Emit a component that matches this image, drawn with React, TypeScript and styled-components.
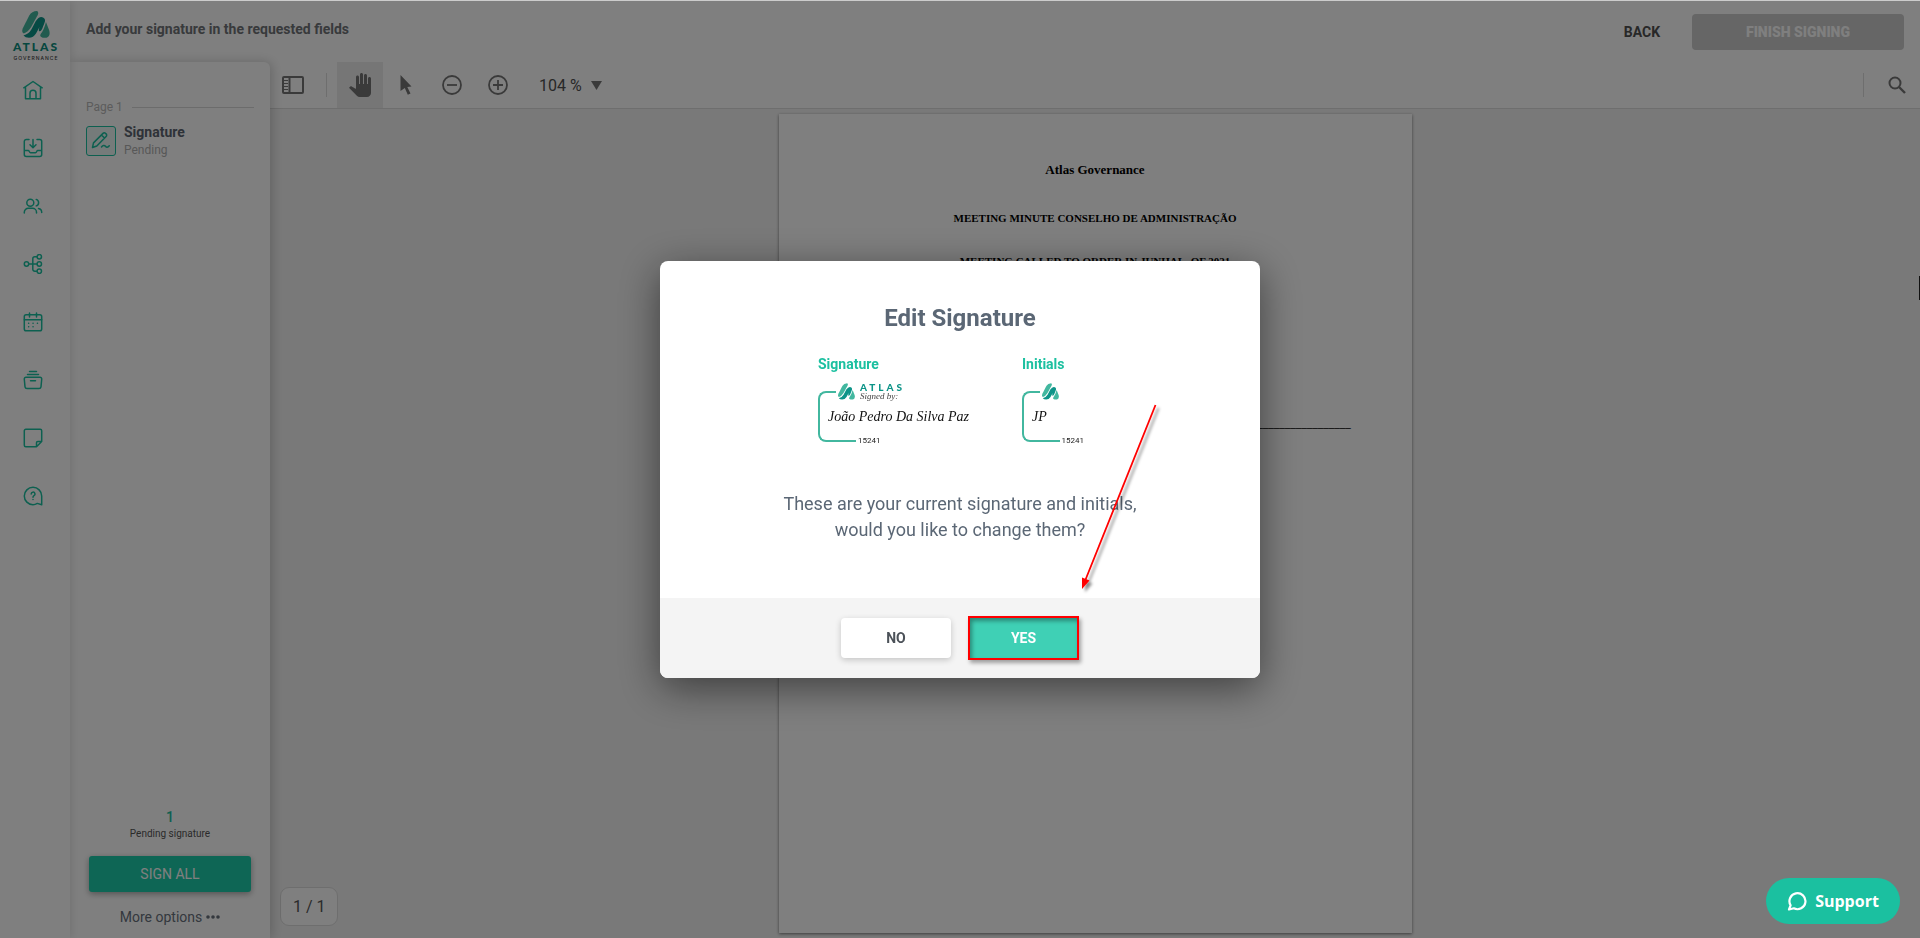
import React from "react";
import styled, { createGlobalStyle } from "styled-components";

const teal = "#1bc0a0";

const GlobalStyle = createGlobalStyle`
  *, *::before, *::after { box-sizing: border-box; }
  body { margin: 0; font-family: Roboto, "Liberation Sans", sans-serif; font-size: 14px; color: #666; background: #fff; }
  button { font: inherit; border: 0; padding: 0; background: none; cursor: pointer; }
  h1, h2, h3, p, ul, dl, dd { margin: 0; padding: 0; }
  svg { display: block; }
`;

const Shell = styled.div`
  display: flex;
  height: 100vh;
  min-height: 640px;
  border-top: 1px solid #ccc;
  overflow: hidden;
`;

const Sidebar = styled.nav`
  flex: 0 0 70px;
  padding: 10px 4px 0 0;
  display: flex;
  flex-direction: column;
  align-items: center;
  background: #fff;
  box-shadow: 2px 0 8px rgba(0, 0, 0, 0.1);
  z-index: 2;
`;

const Brand = styled.a`
  display: flex;
  flex-direction: column;
  align-items: center;
  gap: 3px;
  width: 54px;
  height: 50px;
  margin-left: 6px;
  text-decoration: none;
`;

const BrandName = styled.span`
  font: 900 12px/12px Lato, sans-serif;
  letter-spacing: 2px;
  color: #0d8f80;
`;

const BrandSub = styled.span`
  font: 500 5px/5px Inter, sans-serif;
  letter-spacing: 1px;
  color: #444;
`;

const NavList = styled.ul`
  list-style: none;
`;

const NavLink = styled.a`
  display: flex;
  align-items: center;
  justify-content: center;
  width: 40px;
  height: 58px;
  color: ${teal};
`;

const Main = styled.div`
  flex: 1;
  min-width: 0;
  display: flex;
  flex-direction: column;
`;

const Header = styled.header`
  flex: 0 0 61px;
  display: flex;
  align-items: flex-start;
  padding: 13px 16px 0;
`;

const Title = styled.h1`
  flex: 1;
  font-size: 14px;
  line-height: 30px;
  font-weight: 700;
  color: #707478;
`;

const HeaderButton = styled.button<{ $filled?: boolean }>`
  height: 36px;
  width: ${(p) => (p.$filled ? "212px" : "100px")};
  border-radius: 4px;
  font-weight: ${(p) => (p.$filled ? 900 : 700)};
  color: ${(p) => (p.$filled ? "#fff" : "#505050")};
  background: ${(p) => (p.$filled ? "#ccc" : "transparent")};
`;

const Body = styled.div`
  flex: 1;
  display: flex;
  min-height: 0;
`;

const Panel = styled.aside`
  flex: 0 0 200px;
  display: flex;
  flex-direction: column;
  padding: 35px 16px 10px;
  background: #fff;
  border-radius: 0 6px 0 0;
  box-shadow: 2px 0 12px rgba(0, 0, 0, 0.2);
  z-index: 1;
`;

const PageLabel = styled.h2`
  display: flex;
  align-items: center;
  gap: 9px;
  font-size: 12px;
  line-height: 20px;
  font-weight: 400;
  color: #b8b8b8;
  &::after { content: ""; flex: 1; height: 1px; background: #d8d8d8; }
`;

const FieldRow = styled.button`
  display: flex;
  align-items: center;
  gap: 8px;
  margin-top: 6px;
  text-align: left;
`;

const FieldIcon = styled.span`
  display: flex;
  align-items: center;
  justify-content: center;
  width: 30px;
  height: 30px;
  border: 1px solid ${teal};
  border-radius: 3px;
  background: #eaf6f4;
  color: ${teal};
`;

const FieldName = styled.span`
  display: block;
  font-size: 14px;
  line-height: 18px;
  font-weight: 700;
  color: #5c6570;
`;

const FieldState = styled.span`
  display: block;
  font-size: 12px;
  line-height: 18px;
  color: #b0b0b0;
`;

const PanelFooter = styled.div`
  display: flex;
  flex-direction: column;
  align-items: center;
  margin-top: auto;
`;

const Count = styled.strong`
  font-size: 14px;
  line-height: 18px;
  font-weight: 500;
  color: ${teal};
`;

const CountLabel = styled.span`
  font-size: 10px;
  line-height: 16px;
  color: #555;
`;

const SignAll = styled.button`
  width: 162px;
  height: 36px;
  margin: 14px 0;
  border-radius: 3px;
  background: #1dccaa;
  color: #fff;
  box-shadow: 0 2px 6px rgba(0, 0, 0, 0.35);
`;

const MoreOptions = styled.button`
  display: flex;
  align-items: center;
  gap: 4px;
  line-height: 22px;
  color: #68717c;
`;

const Viewer = styled.main`
  flex: 1;
  min-width: 0;
  display: flex;
  flex-direction: column;
  position: relative;
`;

const Toolbar = styled.div`
  flex: 0 0 47px;
  display: flex;
  align-items: center;
  border-bottom: 1px solid #dcdcdc;
  color: #757575;
`;

const Tool = styled.button<{ $active?: boolean }>`
  display: flex;
  align-items: center;
  justify-content: center;
  width: 46px;
  height: 46px;
  color: inherit;
  background: ${(p) => (p.$active ? "#ececec" : "transparent")};
`;

const Divider = styled.span<{ $push?: boolean }>`
  width: 1px;
  height: 24px;
  margin: 0 10px;
  ${(p) => p.$push && "margin-left: auto;"}
  background: #dcdcdc;
`;

const Zoom = styled.button`
  display: flex;
  align-items: center;
  gap: 9px;
  margin-left: 18px;
  font-size: 16px;
  color: #505050;
`;

const Canvas = styled.div`
  flex: 1;
  min-height: 0;
  display: flex;
  justify-content: center;
  align-items: flex-start;
  padding-top: 5px;
  background: #f3f3f3;
  overflow: hidden;
`;

const Sheet = styled.article`
  width: 633px;
  height: 819px;
  padding: 48px 58px;
  background: #fff;
  box-shadow: 0 1px 3px rgba(0, 0, 0, 0.5);
  font: 700 11px/16px "Liberation Serif", serif;
  text-align: center;
  color: #000;
`;

const SheetTitle = styled.h2`
  margin-bottom: 32px;
  font-size: 13px;
  line-height: 16px;
`;

const SheetLine = styled.p`
  margin-bottom: 27px;
`;

const SignLine = styled.p`
  margin-top: 146px;
  white-space: nowrap;
  overflow: hidden;
  direction: rtl;
`;

const PageBadge = styled.output`
  position: absolute;
  left: 10px;
  bottom: 12px;
  padding: 0 11px 0 12px;
  border: 1px solid #dcdcdc;
  border-radius: 9px;
  background: #fff;
  font-size: 16px;
  line-height: 37px;
  color: #555;
`;

const Overlay = styled.div`
  position: fixed;
  inset: 1px 0 0;
  z-index: 10;
  display: flex;
  align-items: center;
  justify-content: center;
  background: rgba(0, 0, 0, 0.5);
`;

const Dialog = styled.section`
  position: relative;
  width: min(600px, 94%);
  border-radius: 8px;
  background: #fff;
  box-shadow: 0 10px 40px rgba(0, 0, 0, 0.5);
`;

const DialogBody = styled.div`
  padding: 41px 40px 55px;
  color: #5b6775;
`;

const DialogTitle = styled.h2`
  font-size: 24px;
  line-height: 32px;
  font-weight: 700;
  text-align: center;
`;

const Samples = styled.div`
  display: grid;
  grid-template-columns: 204px 62px;
  justify-content: center;
  margin: 20px 0 44px;
  padding-right: 18px;
`;

const SampleName = styled.h3`
  font-size: 14px;
  line-height: 20px;
  color: ${teal};
`;

const Stamp = styled.div`
  margin-top: 9px;
`;

const StampTop = styled.div`
  display: flex;
  height: 17px;
  &::before {
    content: "";
    width: 18px;
    margin: 8px 2px 0 0;
    border: solid #42b79f;
    border-width: 2px 0 0 2px;
    border-radius: 8px 0 0 0;
  }
`;

const StampBrand = styled.span`
  display: flex;
  flex-direction: column;
  margin-left: 5px;
`;

const StampName = styled.span`
  font: 900 10px/9px Lato, sans-serif;
  letter-spacing: 3px;
  color: #0d9488;
`;

const StampBy = styled.span`
  font: italic 400 9px/8px "Liberation Serif", serif;
  color: #444;
`;

const StampText = styled.div`
  padding-left: 8px;
  border-left: 2px solid #42b79f;
  font: italic 400 14px/33px "Liberation Serif", serif;
  white-space: nowrap;
  color: #111;
`;

const StampBottom = styled.div`
  display: flex;
  height: 14px;
  font-size: 8px;
  line-height: 16px;
  color: #222;
  &::before {
    content: "";
    width: 38px;
    height: 9px;
    margin-right: 2px;
    border: solid #42b79f;
    border-width: 0 0 2px 2px;
    border-radius: 0 0 0 8px;
  }
`;

const Question = styled.p`
  font-size: 18px;
  line-height: 26px;
  text-align: center;
`;

const DialogFooter = styled.footer`
  display: flex;
  align-items: center;
  justify-content: center;
  gap: 17px;
  height: 80px;
  border-radius: 0 0 8px 8px;
  background: #f4f4f4;
`;

const NoButton = styled.button`
  width: 110px;
  height: 40px;
  border-radius: 4px;
  background: #fff;
  font-weight: 700;
  color: #4c5259;
  box-shadow: 0 2px 6px rgba(0, 0, 0, 0.2);
`;

const YesButton = styled.button`
  width: 111px;
  height: 44px;
  border: 2px solid #f00;
  background: #3fd0b5;
  font-weight: 700;
  color: #fff;
  box-shadow: 2px 3px 4px rgba(0, 0, 0, 0.35), inset 2px 3px 4px rgba(0, 0, 0, 0.35);
`;

const Pointer = styled.svg`
  position: absolute;
  right: 98px;
  top: 142px;
  pointer-events: none;
`;

const Support = styled.button`
  position: fixed;
  right: 20px;
  bottom: 14px;
  z-index: 20;
  display: flex;
  align-items: center;
  justify-content: center;
  gap: 8px;
  width: 134px;
  height: 46px;
  border-radius: 23px;
  background: ${teal};
  color: #fff;
  font: 700 16px/24px "Open Sans", "Noto Sans", sans-serif;
`;

const EdgeHandle = styled.span`
  position: fixed;
  right: 0;
  top: 276px;
  z-index: 11;
  width: 1px;
  height: 24px;
  background: #111;
`;

const Mark = ({ size }: { size: number }) => (
  <svg width={size} height={size} viewBox="0 0 86 84" aria-hidden="true">
    <path fill="#42b79f" d="M2 54 L22 14 Q30 0 46 0 Q53 3 48 13 L28 50 Q18 66 5 70 Q-3 67 2 54Z" />
    <path fill="#42b79f" d="M74 34 L84 60 Q89 78 76 83 L64 83 Q52 80 58 71 Q68 58 74 34Z" />
    <path fill="#0d9488" d="M4 76 Q20 73 29 57 L42 32 Q53 15 65 20 Q75 25 69 38 L62 56 Q57 66 52 62 Q51 58 54 50 L43 70 Q35 83 21 83 Q10 83 4 76Z" />
  </svg>
);

const Line = ({ children, size = 20 }: { children: React.ReactNode; size?: number }) => (
  <svg width={size} height={size} viewBox="0 0 20 20" fill="none" stroke="currentColor" strokeWidth="1.5" strokeLinecap="round" strokeLinejoin="round" aria-hidden="true">
    {children}
  </svg>
);

const navItems: { label: string; icon: React.ReactNode }[] = [
  { label: "Home", icon: <path d="M.8 7.8 10 1.5l9.2 6.3M2.5 7v11.7h15V7M7 18.700v-5.400a3 3 0 0 1 6 0v5.400" /> },
  { label: "Inbox", icon: <path d="M6 1.500H3.300a2 2 0 0 0-2 2v13a2 2 0 0 0 2 2h13.400a2 2 0 0 0 2-2v-13a2 2 0 0 0-2-2H14M10 1.500v8M7 6.800l3 3 3-3M1.300 12.500h4c1 0 1 2.200 2.200 2.200h5c1.200 0 1.200-2.200 2.200-2.200h4" /> },
  { label: "People", icon: <><circle cx="7.300" cy="6.700" r="3.500" /><path d="M1.300 17v-.7a4 4 0 0 1 4-4h4.200a4 4 0 0 1 4 4v.7M13.200 3.400a3.400 3.400 0 0 1 0 6.500M15.500 12.600a4 4 0 0 1 3.200 4" /></> },
  { label: "Structure", icon: <><circle cx="3.500" cy="10" r="2.200" /><circle cx="16.300" cy="2.800" r="2.200" /><circle cx="16.300" cy="10" r="2.200" /><circle cx="16.300" cy="17.200" r="2.200" /><path d="M5.700 10h8.400M14 2.800h-2.200a2 2 0 0 0-2 2v10.400a2 2 0 0 0 2 2H14" /></> },
  { label: "Calendar", icon: <><rect x="1.300" y="2.800" width="17.400" height="16" rx="1.800" /><path d="M1.300 7.700h17.400M6.500 1v4M13.500 1v4M5.600 11.200h.1M10 11.200h.1M14.400 11.200h.1M5.600 14.800h.1M10 14.800h.1" /></> },
  { label: "Archive", icon: <path d="M3 7.300h14a1.700 1.700 0 0 1 1.700 1.900l-.7 7.600a2 2 0 0 1-2 1.700H4a2 2 0 0 1-2-1.700l-.7-7.600A1.700 1.700 0 0 1 3 7.300M4.500 4.400h11M6.500 1.500h7M7.500 10.700h5" /> },
  { label: "Notes", icon: <path d="M2.800 1.300h14.400a1.500 1.500 0 0 1 1.500 1.500v10.700l-5.200 5.200H2.800a1.500 1.500 0 0 1-1.500-1.500V2.800a1.500 1.500 0 0 1 1.500-1.500M13.500 18.700v-3.900a1.300 1.300 0 0 1 1.300-1.300h3.900" /> },
  { label: "Help", icon: <path d="M18.700 18.700v-8.700a8.700 8.700 0 1 0-8.700 8.700c1.700 0 3-.5 4.300-1.300zM8.200 8a1.900 1.900 0 1 1 2.800 1.700c-.7.4-1 .8-1 1.600M10 13.500v.1" /> },
];

const StampCard = ({ text, brand }: { text: string; brand?: boolean }) => (
  <Stamp>
    <StampTop>
      <Mark size={17} />
      {brand && (
        <StampBrand>
          <StampName>ATLAS</StampName>
          <StampBy>Signed by:</StampBy>
        </StampBrand>
      )}
    </StampTop>
    <StampText>{text}</StampText>
    <StampBottom>15241</StampBottom>
  </Stamp>
);

export default function App() {
  return (
    <>
      <GlobalStyle />
      <Shell>
        <Sidebar aria-label="Main">
          <Brand href="#" aria-label="Atlas Governance">
            <Mark size={28} />
            <BrandName>ATLAS</BrandName>
            <BrandSub>GOVERNANCE</BrandSub>
          </Brand>
          <NavList>
            {navItems.map((item) => (
              <li key={item.label}>
                <NavLink href="#" aria-label={item.label}>
                  <Line>{item.icon}</Line>
                </NavLink>
              </li>
            ))}
          </NavList>
        </Sidebar>
        <Main>
          <Header>
            <Title>Add your signature in the requested fields</Title>
            <HeaderButton>BACK</HeaderButton>
            <HeaderButton $filled>FINISH SIGNING</HeaderButton>
          </Header>
          <Body>
            <Panel>
              <PageLabel>Page 1</PageLabel>
              <FieldRow>
                <FieldIcon>
                  <Line>
                    <path d="M1.500 16.500l1-4.600L12 2.400a1.800 1.800 0 0 1 2.600 0l.5.500a1.800 1.800 0 0 1 0 2.600L5.800 15zM10.500 4l3 3M10.500 16c1.500-2 3-2 4-.7s2.300 1.200 3.800-.5" />
                  </Line>
                </FieldIcon>
                <span>
                  <FieldName>Signature</FieldName>
                  <FieldState>Pending</FieldState>
                </span>
              </FieldRow>
              <PanelFooter>
                <Count>1</Count>
                <CountLabel>Pending signature</CountLabel>
                <SignAll>SIGN ALL</SignAll>
                <MoreOptions>
                  More options
                  <svg width="14" height="4" viewBox="0 0 14 4" fill="currentColor" aria-hidden="true">
                    <circle cx="2" cy="2" r="1.800" /><circle cx="7" cy="2" r="1.800" /><circle cx="12" cy="2" r="1.800" />
                  </svg>
                </MoreOptions>
              </PanelFooter>
            </Panel>
            <Viewer>
              <Toolbar role="toolbar">
                <Tool aria-label="Toggle sidebar">
                  <svg width="22" height="18" viewBox="0 0 22 18" fill="none" stroke="currentColor">
                    <rect x="1" y="1" width="20" height="16" rx="1" strokeWidth="2" />
                    <path d="M7.500 1v16" strokeWidth="2" /><path d="M2 4.500h4M2 7.500h4M2 10.500h4M2 13.500h4" />
                  </svg>
                </Tool>
                <Divider />
                <Tool $active aria-label="Pan">
                  <svg width="24" height="24" viewBox="0 0 24 24" fill="currentColor">
                    <path d="M23 5.500V20c0 2.200-1.800 4-4 4h-7.300c-1.080 0-2.100-.43-2.850-1.190L1 14.830s1.260-1.230 1.300-1.250c.22-.19.490-.29.790-.29.220 0 .420.060.600.160.040.010 4.310 2.460 4.310 2.460V4c0-.83.670-1.500 1.500-1.500S11 3.170 11 4v7h1V1.500c0-.83.670-1.500 1.500-1.500S15 .670 15 1.500V11h1V2.500c0-.83.670-1.500 1.500-1.500s1.500.670 1.500 1.500V11h1V5.500c0-.83.670-1.500 1.500-1.500s1.500.670 1.500 1.500z" />
                  </svg>
                </Tool>
                <Tool aria-label="Select">
                  <svg width="12" height="20" viewBox="0 0 12 20" fill="currentColor">
                    <path d="M.5 0 11.500 11.500 7.300 12 10.500 18.500 7.800 19.800 4.800 13 .5 16z" />
                  </svg>
                </Tool>
                <Tool aria-label="Zoom out">
                  <svg width="20" height="20" viewBox="0 0 20 20" fill="none" stroke="currentColor" strokeWidth="1.800"><circle cx="10" cy="10" r="9" /><path d="M5 10h10" /></svg>
                </Tool>
                <Tool aria-label="Zoom in">
                  <svg width="20" height="20" viewBox="0 0 20 20" fill="none" stroke="currentColor" strokeWidth="1.800"><circle cx="10" cy="10" r="9" /><path d="M5 10h10M10 5v10" /></svg>
                </Tool>
                <Zoom>
                  104 %
                  <svg width="11" height="9" viewBox="0 0 11 9" fill="#757575" aria-hidden="true"><path d="M0 0h11L5.500 9z" /></svg>
                </Zoom>
                <Divider $push />
                <Tool aria-label="Search">
                  <svg width="18" height="18" viewBox="0 0 18 18" fill="none" stroke="currentColor" strokeWidth="2"><circle cx="7" cy="7" r="5.500" /><path d="m11 11 6 6" strokeWidth="2.400" /></svg>
                </Tool>
              </Toolbar>
              <Canvas>
                <Sheet>
                  <SheetTitle>Atlas Governance</SheetTitle>
                  <SheetLine>MEETING MINUTE CONSELHO DE ADMINISTRAÇÃO</SheetLine>
                  <SheetLine>MEETING CALLED TO ORDER IN JUNHAL, OF 2021</SheetLine>
                  <SignLine>{"_".repeat(93)}</SignLine>
                </Sheet>
              </Canvas>
              <PageBadge>1 / 1</PageBadge>
            </Viewer>
          </Body>
        </Main>
      </Shell>
      <EdgeHandle />
      <Overlay>
        <Dialog role="dialog" aria-modal="true" aria-labelledby="dialog-title">
          <DialogBody>
            <DialogTitle id="dialog-title">Edit Signature</DialogTitle>
            <Samples>
              <div>
                <SampleName>Signature</SampleName>
                <StampCard text="João Pedro Da Silva Paz" brand />
              </div>
              <div>
                <SampleName>Initials</SampleName>
                <StampCard text="JP" />
              </div>
            </Samples>
            <Question>
              These are your current signature and initials,
              <br />
              would you like to change them?
            </Question>
          </DialogBody>
          <DialogFooter>
            <NoButton>NO</NoButton>
            <YesButton>YES</YesButton>
          </DialogFooter>
          <Pointer width="82" height="196" viewBox="0 0 82 196" aria-hidden="true">
            <defs>
              <filter id="soft" x="-20%" y="-10%" width="150%" height="120%">
                <feDropShadow dx="3" dy="3" stdDeviation="1.500" floodColor="#000" floodOpacity="0.450" />
              </filter>
            </defs>
            <g filter="url(#soft)">
              <path d="M75.500 2 5 178" stroke="#f00" strokeWidth="1.800" />
              <path d="M2 186V174.500L9.500 177.500z" fill="#f00" />
            </g>
          </Pointer>
        </Dialog>
      </Overlay>
      <Support>
        <svg width="20" height="20" viewBox="0 0 20 20" fill="none" stroke="currentColor" strokeWidth="2.200" strokeLinejoin="round" aria-hidden="true">
          <path d="M2 18.500l1.600-4.200a8 8 0 1 1 3.200 3z" />
        </svg>
        Support
      </Support>
    </>
  );
}
